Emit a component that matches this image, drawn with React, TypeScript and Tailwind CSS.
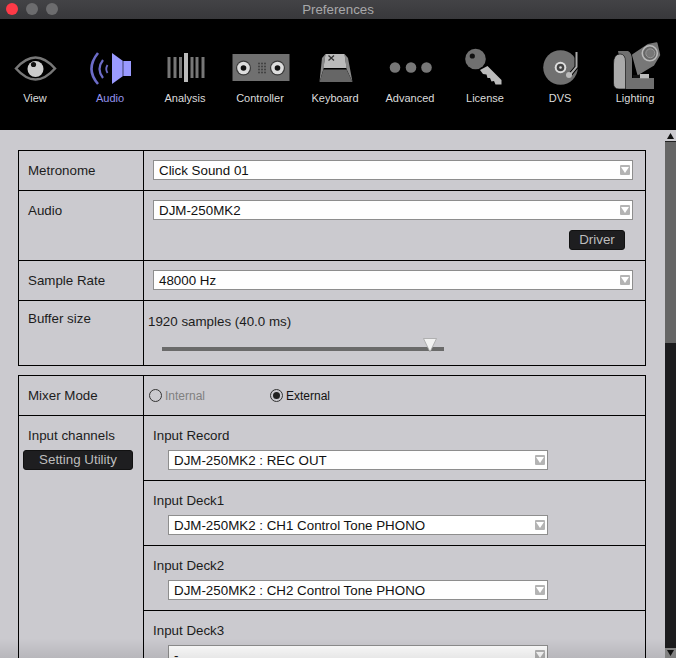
const NAV_ITEMS = ['View', 'Audio', 'Analysis', 'Controller', 'Keyboard', 'Advanced', 'License', 'DVS', 'Lighting'];

// each icon is drawn in a 75x50 box, centred on its label
function NavIcon({ name }: { name: string }) {
  switch (name) {
    case 'View':
      return (
        <>
          <path d="M18 28.5 Q37.5 6.5 57 28.5 Q37.5 50.5 18 28.5 Z" fill="#000" stroke="#777" strokeWidth="2.5" />
          <circle cx="37.5" cy="29" r="8" fill="#ccc" />
          <circle cx="35.5" cy="24.5" r="2.6" fill="#111" />
        </>
      );
    case 'Audio':
      return (
        <>
          <path d="M25 13 Q12 29 25 44" fill="none" stroke="#6c6cc8" strokeWidth="2.6" />
          <path d="M30 20 Q23 29 30 38" fill="none" stroke="#6c6cc8" strokeWidth="2.2" />
          <path d="M34.5 25 Q32 29 34.5 33" fill="none" stroke="#6c6cc8" strokeWidth="1.8" />
          <path d="M39 13 L50 21 L58 21 L58 36 L50 36 L39 44 Z" fill="#9a9aff" />
          <path d="M50 21 V36" stroke="#000" strokeWidth="0.6" />
        </>
      );
    case 'Analysis':
      return (
        <>
          {[19.5, 25.5, 31, 42.5, 47.5, 53.5].map((x) => (
            <rect key={x} x={x} y="17" width="3" height="21" fill="#777" />
          ))}
          <rect x="36" y="13" width="4" height="29" fill="#bbb" />
        </>
      );
    case 'Controller':
      return (
        <>
          <rect x="9.5" y="14" width="57" height="27" fill="#707070" />
          {[20.5, 54.5].map((x) => (
            <g key={x}>
              <circle cx={x} cy="28" r="7.5" fill="#3a3a3a" />
              <circle cx={x} cy="28" r="6.3" fill="#ddd" />
              <circle cx={x} cy="28" r="2.8" fill="#111" />
            </g>
          ))}
          {[36, 39, 42].map((x) =>
            [23.5, 26.5, 29.5, 32.5].map((y) => <rect key={`${x}-${y}`} x={x - 0.7} y={y - 0.8} width="1.4" height="1.6" fill="#333" />),
          )}
        </>
      );
    case 'Keyboard':
      return (
        <>
          <path d="M27.5 14 L24 18 L21.5 42 L25.5 29 Z" fill="#888" />
          <path d="M46.5 14 L50 18 L54.5 42 L48.5 29 Z" fill="#888" />
          <path d="M27.5 14 H46.5 L48.5 28 H25.5 Z" fill="#bbb" />
          <path d="M25.5 29.5 H48.5 L54.5 42 H21.5 Z" fill="#666" />
          <path d="M30.5 15.5 L36 20.5 M36 15.5 L30.5 20.5" stroke="#333" strokeWidth="1.3" />
        </>
      );
    case 'Advanced':
      return (
        <>
          <circle cx="22" cy="27.5" r="5.3" fill="#777" />
          <circle cx="38" cy="27.5" r="5.3" fill="#777" />
          <circle cx="53.5" cy="27.5" r="5.3" fill="#777" />
        </>
      );
    case 'License':
      return (
        <>
          <path d="M32 30 L39.5 26 L53.5 40 V44.5 H47.5 L46 41 L43.5 41.5 L42 38 L39.5 38 L38.5 34.5 L35 34 Z" fill="#bbb" />
          <circle cx="27.5" cy="19" r="10.3" fill="#707070" />
          <circle cx="24.3" cy="16" r="2.6" fill="#111" />
        </>
      );
    case 'DVS':
      return (
        <>
          <circle cx="37.5" cy="27.5" r="17.3" fill="#707070" />
          <circle cx="37.5" cy="27.5" r="5.8" fill="#ddd" />
          <circle cx="37.5" cy="27.5" r="3.8" fill="#444" />
          <circle cx="37.5" cy="27.5" r="1.3" fill="#ddd" />
          <path d="M53.5 12 V27 L46 36" fill="none" stroke="#000" strokeWidth="4" />
          <path d="M53.5 12 V27 L46 36" fill="none" stroke="#aaa" strokeWidth="2" />
          <circle cx="46" cy="35" r="3" fill="#bbb" />
        </>
      );
    default:
      return (
        <>
          <path d="M20 11 H30 Q34 13 34 20 V38 H56 V49 H27 Z" fill="#707070" />
          <path d="M15.5 24 Q15.5 14 22 14 Q27.5 14 27.5 22 V49 H21 Q15.5 49 15.5 43 Z" fill="#aaa" stroke="#000" strokeWidth="0.6" />
          <path d="M35 15 L50 5 L58.5 3.3 L61.2 15 L55.2 25 L40.2 34 Z" fill="#777" stroke="#777" strokeLinejoin="round" strokeWidth="2" />
          <circle cx="51.8" cy="13.3" r="7.5" fill="#666" stroke="#bbb" strokeWidth="1.6" />
          <circle cx="52.3" cy="13.3" r="4.5" fill="#777" stroke="#999" strokeWidth="1" />
          <rect x="41.8" y="34" width="9.2" height="4.3" fill="#bbb" />
          <rect x="35" y="35" width="6.8" height="3" fill="#111" />
        </>
      );
  }
}

function Select({ value, className }: { value: string; className: string }) {
  return (
    <div className={`flex h-5 items-center border border-[#8e8e8e] bg-white pl-[5px] pr-[2px] text-[13.35px] text-[#111] ${className}`}>
      <span className="flex-1 pt-px">{value}</span>
      <span className="flex h-[10px] w-[10px] items-center justify-center rounded-[1px] bg-[#b4b4b4]">
        <svg width="8" height="6" viewBox="0 0 8 6">
          <path d="M0 0 H8 L4 6 Z" fill="#fff" />
        </svg>
      </span>
    </div>
  );
}

function DarkButton({ label, className }: { label: string; className: string }) {
  return (
    <div className={`flex h-5 items-center justify-center rounded-[3px] border border-[#111] bg-[#1e1e20] text-[13.35px] text-[#bdbdbd] ${className}`}>
      {label}
    </div>
  );
}

function Row({ label, labelClass, className, children }: { label: string; labelClass: string; className: string; children: React.ReactNode }) {
  return (
    <div className={`flex border-b border-black ${className}`}>
      <div className={`w-[125px] shrink-0 border-r border-black pl-[9px] text-[13.35px] leading-4 text-[#1c1c1c] ${labelClass}`}>{label}</div>
      <div className="min-w-0 flex-1">{children}</div>
    </div>
  );
}

function Radio({ label, checked, className }: { label: string; checked?: boolean; className: string }) {
  return (
    <div className={`flex items-center gap-[3px] text-[12px] ${checked ? 'text-[#111]' : 'text-[#808080]'} ${className}`}>
      <span className="flex h-[13px] w-[13px] items-center justify-center rounded-full border border-[#333]">
        {checked && <span className="h-[7px] w-[7px] rounded-full bg-[#222]" />}
      </span>
      {label}
    </div>
  );
}

const INPUTS = [
  { label: 'Input Record', value: 'DJM-250MK2 : REC OUT' },
  { label: 'Input Deck1', value: 'DJM-250MK2 : CH1 Control Tone PHONO' },
  { label: 'Input Deck2', value: 'DJM-250MK2 : CH2 Control Tone PHONO' },
  { label: 'Input Deck3', value: '-' },
];

export default function App() {
  return (
    <div className="flex h-[658px] w-[676px] flex-col overflow-hidden bg-black font-['Liberation_Sans',sans-serif]">
      <div className="relative flex h-[19px] shrink-0 items-center justify-center bg-gradient-to-b from-[#434346] to-[#38383b] text-[13.3px] text-[#a8a8aa]">
        <div className="absolute left-[6px] top-[3px] flex gap-[8px]">
          <span className="h-3 w-3 rounded-full bg-[#fe3a47]" />
          <span className="h-3 w-3 rounded-full bg-[#6c6c6e]" />
          <span className="h-3 w-3 rounded-full bg-[#6c6c6e]" />
        </div>
        Preferences
      </div>

      <div className="-ml-[2.5px] flex h-[111px] shrink-0 pt-[21px]">
        {NAV_ITEMS.map((item) => (
          <div key={item} className="flex w-[75px] shrink-0 flex-col items-center">
            <svg width="75" height="50" viewBox="0 0 75 50">
              <NavIcon name={item} />
            </svg>
            <span className={`text-[11px] leading-4 ${item === 'Audio' ? 'text-[#9494ee]' : 'text-[#dcdcdc]'}`}>{item}</span>
          </div>
        ))}
      </div>

      <div className="relative flex min-h-0 flex-1 bg-[#cbcacf]">
        <div className="min-w-0 flex-1 overflow-hidden pl-[18px] pt-[20px]">
          <div className="w-[628px] border-x border-t border-black">
            <Row label="Metronome" labelClass="pt-[12px]" className="h-10">
              <Select value="Click Sound 01" className="ml-[9px] mt-[9px] w-[480px]" />
            </Row>
            <Row label="Audio" labelClass="pt-[12px]" className="h-[70px]">
              <Select value="DJM-250MK2" className="ml-[9px] mt-[9px] w-[480px]" />
              <div className="mt-[10px] flex justify-end pr-[20px]">
                <DarkButton label="Driver" className="w-14" />
              </div>
            </Row>
            <Row label="Sample Rate" labelClass="pt-[12px]" className="h-10">
              <Select value="48000 Hz" className="ml-[9px] mt-[9px] w-[480px]" />
            </Row>
            <Row label="Buffer size" labelClass="pt-[10px]" className="h-[65px]">
              <div className="pl-[4px] pt-[11px] text-[13.35px] leading-5 text-[#1c1c1c]">1920 samples (40.0 ms)</div>
              <div className="relative ml-[18px] mt-[15px] h-1 w-[282px] bg-[#6a6a6a]">
                <svg className="absolute left-[261px] top-[-9px]" width="14" height="15" viewBox="0 0 14 15">
                  <path d="M0.5 0.5 H13.5 L7 14 Z" fill="#f2f2f2" stroke="#a5a5a5" strokeWidth="0.8" />
                </svg>
              </div>
            </Row>
          </div>

          <div className="mt-[9px] w-[628px] border-x border-t border-black">
            <Row label="Mixer Mode" labelClass="pt-[12px]" className="h-10">
              <div className="flex h-full items-center pl-[5px]">
                <Radio label="Internal" className="w-[121px]" />
                <Radio label="External" checked className="" />
              </div>
            </Row>
            <div className="flex">
              <div className="w-[125px] shrink-0 border-r border-black">
                <div className="pl-[9px] pt-[12px] text-[13.35px] leading-4 text-[#1c1c1c]">Input channels</div>
                <DarkButton label="Setting Utility" className="ml-[4px] mt-[6px] w-[110px]" />
              </div>
              <div className="min-w-0 flex-1">
                {INPUTS.map((input) => (
                  <div key={input.label} className="h-[65px] border-b border-black pl-[9px] pt-[12px]">
                    <div className="text-[13.35px] leading-4 text-[#1c1c1c]">{input.label}</div>
                    <Select value={input.value} className="ml-[15px] mt-[6px] w-[380px]" />
                  </div>
                ))}
              </div>
            </div>
          </div>
        </div>

        <div className="flex w-[11px] shrink-0 flex-col bg-[#1c1c1e]">
          <div className="flex h-[12px] items-center justify-center border-b border-[#222] bg-[#cbcacf]">
            <svg width="7" height="6" viewBox="0 0 7 6">
              <path d="M3.5 0 L7 6 H0 Z" fill="#111" />
            </svg>
          </div>
          <div className="h-[201px] bg-[#666]" />
          <div className="flex-1" />
          <div className="flex h-[10px] items-center justify-center bg-[#8c8c8c]">
            <svg width="7" height="6" viewBox="0 0 7 6">
              <path d="M0 0 H7 L3.5 6 Z" fill="#111" />
            </svg>
          </div>
        </div>

        <div className="pointer-events-none absolute inset-x-0 bottom-0 h-[20px] bg-gradient-to-b from-transparent to-[#00000018]" />
      </div>
    </div>
  );
}
